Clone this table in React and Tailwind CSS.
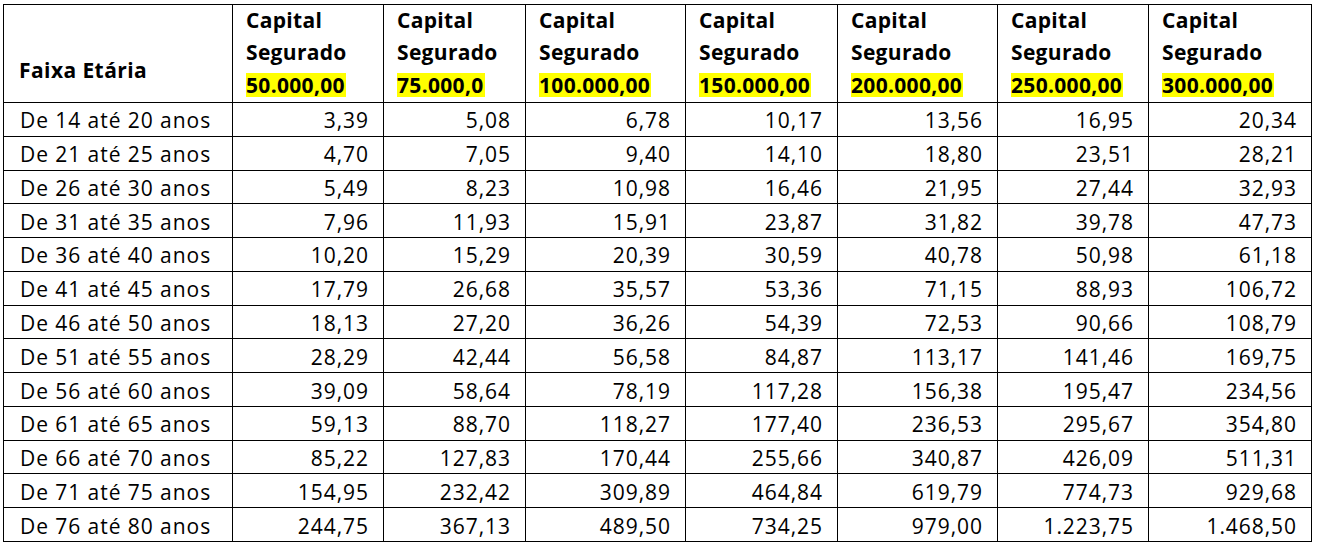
import React from "react";

const valores = ["50.000,00", "75.000,0", "100.000,00", "150.000,00", "200.000,00", "250.000,00", "300.000,00"];

const larguras = ["w-[229px]", "w-[151px]", "w-[142px]", "w-[160px]", "w-[152px]", "w-[160px]", "w-[151px]", "w-[163px]"];

const linhas = [
  ["De 14 até 20 anos", "3,39", "5,08", "6,78", "10,17", "13,56", "16,95", "20,34"],
  ["De 21 até 25 anos", "4,70", "7,05", "9,40", "14,10", "18,80", "23,51", "28,21"],
  ["De 26 até 30 anos", "5,49", "8,23", "10,98", "16,46", "21,95", "27,44", "32,93"],
  ["De 31 até 35 anos", "7,96", "11,93", "15,91", "23,87", "31,82", "39,78", "47,73"],
  ["De 36 até 40 anos", "10,20", "15,29", "20,39", "30,59", "40,78", "50,98", "61,18"],
  ["De 41 até 45 anos", "17,79", "26,68", "35,57", "53,36", "71,15", "88,93", "106,72"],
  ["De 46 até 50 anos", "18,13", "27,20", "36,26", "54,39", "72,53", "90,66", "108,79"],
  ["De 51 até 55 anos", "28,29", "42,44", "56,58", "84,87", "113,17", "141,46", "169,75"],
  ["De 56 até 60 anos", "39,09", "58,64", "78,19", "117,28", "156,38", "195,47", "234,56"],
  ["De 61 até 65 anos", "59,13", "88,70", "118,27", "177,40", "236,53", "295,67", "354,80"],
  ["De 66 até 70 anos", "85,22", "127,83", "170,44", "255,66", "340,87", "426,09", "511,31"],
  ["De 71 até 75 anos", "154,95", "232,42", "309,89", "464,84", "619,79", "774,73", "929,68"],
  ["De 76 até 80 anos", "244,75", "367,13", "489,50", "734,25", "979,00", "1.223,75", "1.468,50"],
];

function App() {
  return (
    <div className="bg-white w-[1318px] h-[547px] pl-[3px] pt-[4px] text-black font-['Open_Sans',sans-serif] text-[21px] tracking-[0.045em]">
      <table className="table-fixed border-collapse w-[1308px]">
        <colgroup>
          {larguras.map((w, i) => (
            <col key={i} className={w} />
          ))}
        </colgroup>
        <thead>
          <tr className="h-[98px]">
            <th className="border border-black align-top text-left font-bold tracking-[0.02em] pl-[15px] pt-[49px] leading-[32px]">
              Faixa Etária
            </th>
            {valores.map((v) => (
              <th key={v} className="border border-black align-top text-left font-bold tracking-[0.015em] pl-[13px] pt-0">
                <div className="leading-[31.5px]">Capital</div>
                <div className="leading-[31.5px]">Segurado</div>
                <div className="leading-[34px]">
                  <span className="inline-block bg-[#ffff00] leading-[24px] pr-[1px]">{v}</span>
                </div>
              </th>
            ))}
          </tr>
        </thead>
        <tbody>
          {linhas.map((linha) => (
            <tr key={linha[0]} className="h-[33.77px]">
              {linha.map((c, i) => (
                <td
                  key={i}
                  className={`border border-black align-middle leading-[26px] pt-[2px] pb-0 ${i === 0 ? "text-left pl-[16px]" : "text-right pr-[14px]"}`}
                >
                  {c}
                </td>
              ))}
            </tr>
          ))}
        </tbody>
      </table>
    </div>
  );
}

export default App;
